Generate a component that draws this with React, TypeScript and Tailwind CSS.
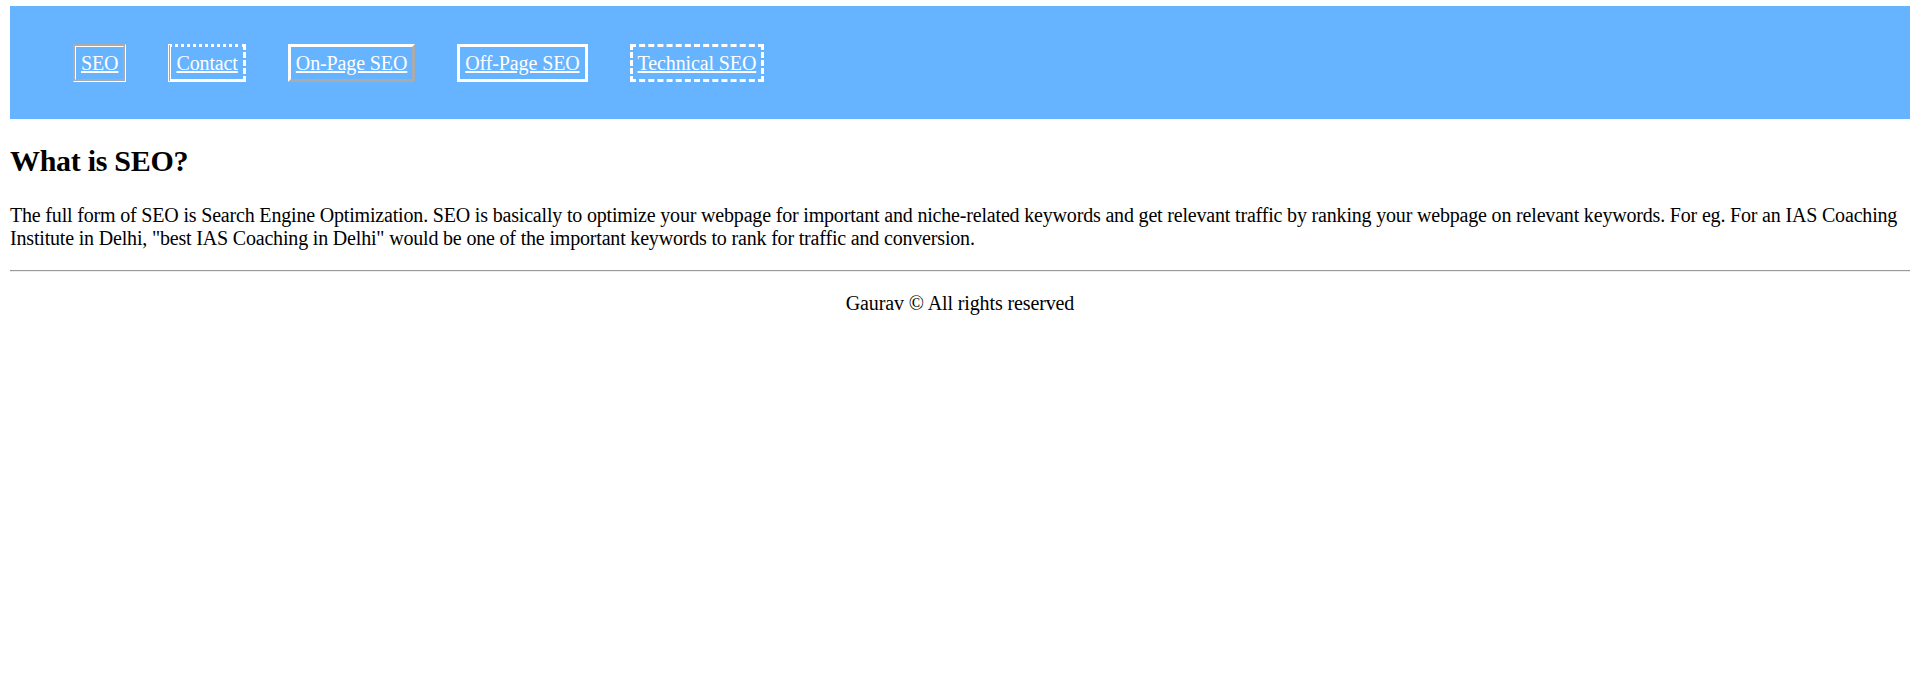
const NAV = [
  { label: "SEO", border: "border-[3px] border-white [border-style:groove]" },
  { label: "Contact", border: "border-[3px] border-white [border-style:dotted_dashed_solid_double]" },
  { label: "On-Page SEO", border: "border-[3px] border-white [border-style:outset]" },
  { label: "Off-Page SEO", border: "border-[3px] border-white border-solid" },
  { label: "Technical SEO", border: "border-[3px] border-white border-dashed" },
];

export default function App() {
  return (
    <div className="min-h-[680px] bg-white px-[10px] pt-[6px] font-['Liberation_Serif','Times_New_Roman',serif] text-[20px] tracking-[-0.12px] text-black">
      {/* Nav */}
      <nav className="flex h-[113px] items-center bg-[#66b3ff] pl-[63px]">
        <ul className="flex items-center gap-[42px]">
          {NAV.map(({ label, border }) => (
            <li key={label}>
              <a href="#" className={`inline-block px-[5px] py-[5px] leading-[22px] text-white underline ${border}`}>
                {label}
              </a>
            </li>
          ))}
        </ul>
      </nav>

      <h2 className="mt-[25px] mb-[25px] text-[30px] font-bold leading-[34.5px] tracking-[-0.3px]">What is SEO?</h2>
      <p className="leading-[23px] tracking-[-0.18px]">
        The full form of SEO is Search Engine Optimization. SEO is basically to optimize your webpage for important and niche-related keywords and get relevant traffic by ranking your webpage on relevant keywords. For eg. For an IAS Coaching Institute in Delhi, "best IAS Coaching in Delhi" would be one of the important keywords to rank for traffic and conversion.
      </p>

      <hr className="mt-[20px] h-0 border-t border-b border-t-[#9a9a9a] border-b-[#eeeeee]" />

      <footer>
        <p className="mt-[20px] text-center leading-[23px]">Gaurav © All rights reserved</p>
      </footer>
    </div>
  );
}
